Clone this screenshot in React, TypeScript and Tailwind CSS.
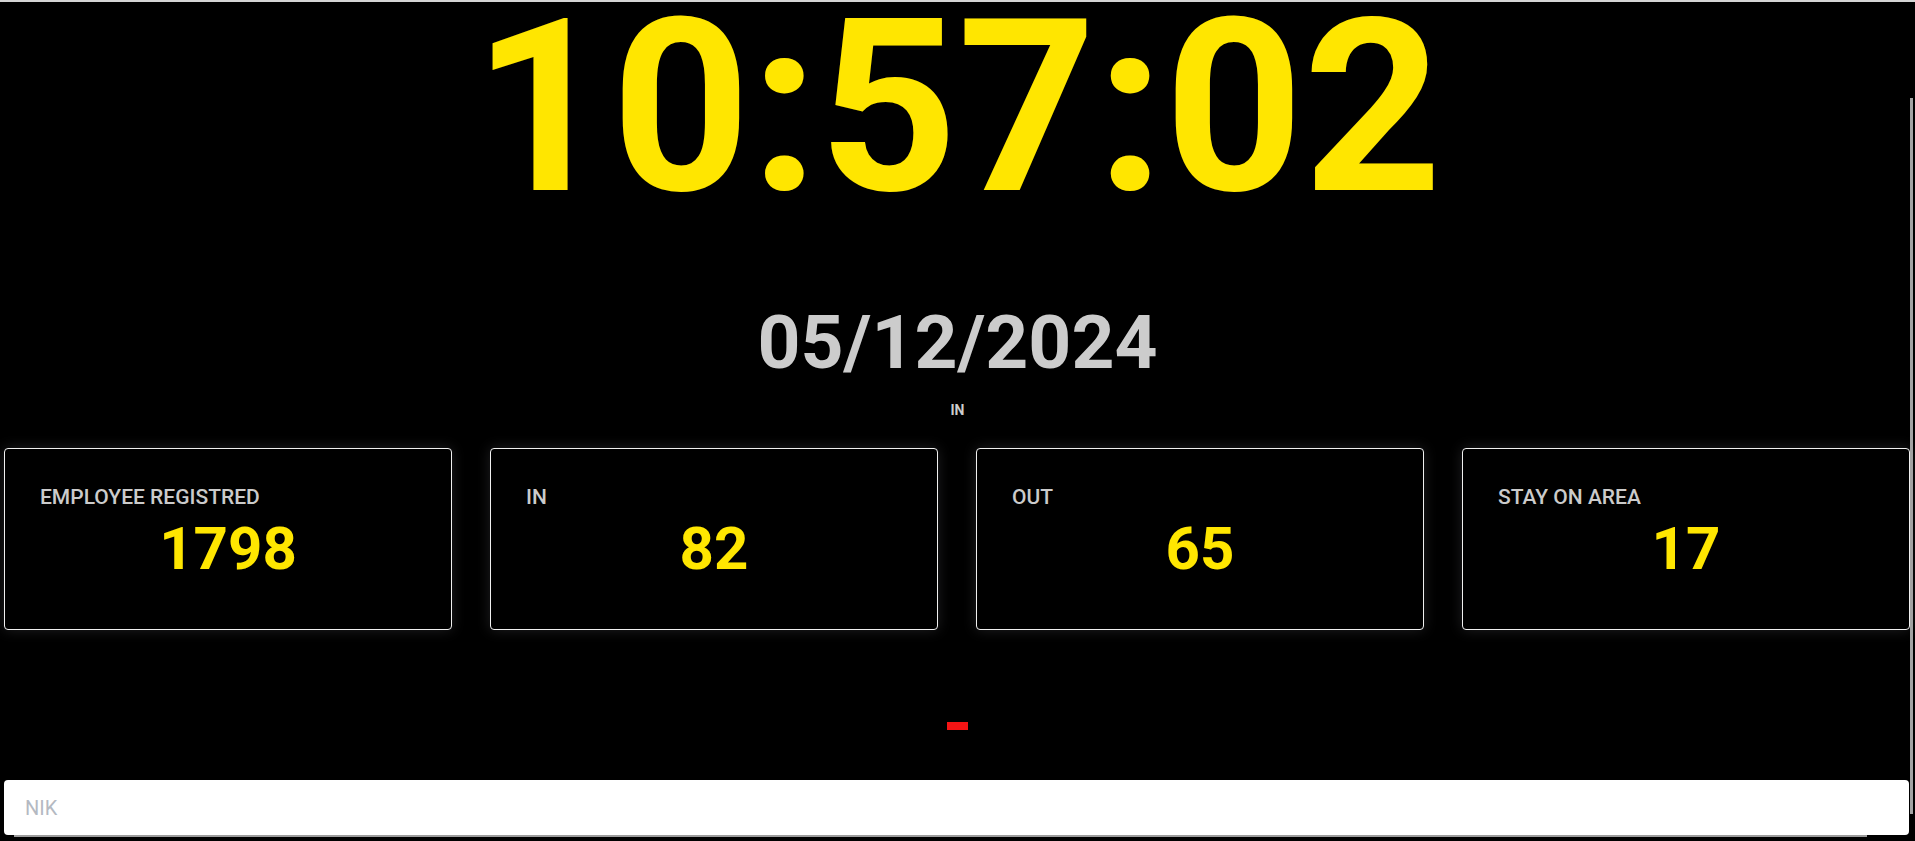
import { useState } from "react";

const stats = [
  { id: 0, label: "EMPLOYEE REGISTRED", value: 1798 },
  { id: 1, label: "IN", value: 82 },
  { id: 2, label: "OUT", value: 65 },
  { id: 3, label: "STAY ON AREA", value: 17 },
];

const App = () => {
  const [nik, setNik] = useState("");

  return (
    <div className="relative h-[841px] w-full overflow-hidden bg-black border-t-2 border-[#d4d4d4] font-['Roboto',sans-serif]">
      <div className="flex flex-col items-center">
        <h1 className="mt-[5px] text-[242px] leading-[200px] font-bold text-[#ffe600]">10:57:02</h1>
        <h2 className="mt-[88px] text-[75px] leading-[94px] font-bold text-[#cccccc]">05/12/2024</h2>
        <p className="mt-[13px] text-[14px] leading-[16px] font-bold text-[#cccccc]">IN</p>
      </div>

      <div className="mt-[30px] grid grid-cols-4 gap-[38px] pl-[4px] pr-[5px]">
        {stats.map((item) => (
          <div
            key={item.id}
            className="h-[182px] rounded border border-[#f0f0f0] bg-black pt-[36px] pl-[35px] shadow-[0_0_14px_rgba(160,160,170,0.2)]"
          >
            <p className="text-[21px] leading-[25px] font-medium text-[#cbcbcb]">{item.label}</p>
            <p className="mt-[1px] pr-[35px] text-center text-[60px] leading-[75px] font-bold text-[#ffe600]">
              {item.value}
            </p>
          </div>
        ))}
      </div>

      <div className="mt-[92px] flex justify-center">
        <div className="h-[8px] w-[21px] bg-[#f51414]" />
      </div>

      <div className="mt-[50px] pl-[4px] pr-[6px]">
        <input
          value={nik}
          onChange={(e) => setNik(e.target.value)}
          placeholder="NIK"
          className="h-[55px] w-full rounded bg-white pl-[21px] text-[20px] text-gray-800 outline-none placeholder:text-[#b4b9c2]"
        />
      </div>

      {/* window edge lines over the page */}
      <div className="absolute right-[2px] top-[96px] h-[716px] w-[3px] bg-[#a3a3a3]" />
      <div className="absolute bottom-[4px] left-[14px] h-[2px] w-[1853px] bg-[#9c9c9c]" />
    </div>
  );
};

export default App;
